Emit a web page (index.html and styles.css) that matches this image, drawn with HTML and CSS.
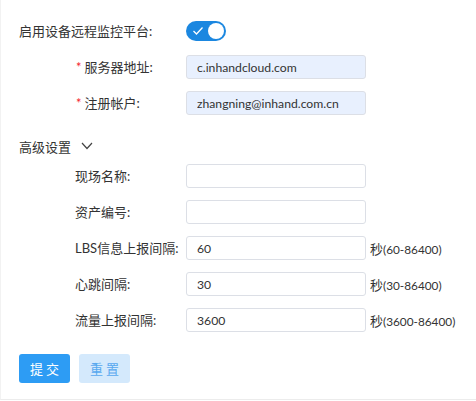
FILE: index.html
```html
<!DOCTYPE html>
<html>
<head>
<meta charset="utf-8">
<link rel="stylesheet" href="styles.css">
</head>
<body>
<div class="panel">
  <div class="row row-first">
    <div class="label label-wide">启用设备远程监控平台:</div>
    <div class="switch">
      <svg class="check" width="12" height="10" viewBox="0 0 12 10"><polyline points="1.5,5 4.5,8 10.5,1.5" fill="none" stroke="#fff" stroke-width="1.3"/></svg>
      <span class="knob"></span>
    </div>
  </div>
  <div class="row">
    <div class="label label-indent"><span class="req">*</span>服务器地址:</div>
    <input class="field filled" value="c.inhandcloud.com">
  </div>
  <div class="row">
    <div class="label label-indent"><span class="req">*</span>注册帐户:</div>
    <input class="field filled" value="zhangning@inhand.com.cn">
  </div>

  <div class="section">
    <span>高级设置</span>
    <svg class="chev" width="12" height="8" viewBox="0 0 12 8"><polyline points="1,1 6,6.5 11,1" fill="none" stroke="#444" stroke-width="1.2"/></svg>
  </div>

  <div class="row">
    <div class="label label-adv">现场名称:</div>
    <input class="field" value="">
  </div>
  <div class="row">
    <div class="label label-adv">资产编号:</div>
    <input class="field" value="">
  </div>
  <div class="row">
    <div class="label label-adv">LBS信息上报间隔:</div>
    <input class="field" value="60">
    <span class="unit"><span class="unit-cjk">秒</span>(60-86400)</span>
  </div>
  <div class="row">
    <div class="label label-adv">心跳间隔:</div>
    <input class="field" value="30">
    <span class="unit"><span class="unit-cjk">秒</span>(30-86400)</span>
  </div>
  <div class="row">
    <div class="label label-adv">流量上报间隔:</div>
    <input class="field" value="3600">
    <span class="unit"><span class="unit-cjk">秒</span>(3600-86400)</span>
  </div>

  <div class="actions">
    <button class="btn btn-primary">提 交</button>
    <button class="btn btn-light">重 置</button>
  </div>
</div>
</body>
</html>
```

FILE: styles.css
```css
html, body {
  margin: 0;
  padding: 0;
  background: #fff;
}
body {
  font-family: Lato, "Noto Sans CJK SC", sans-serif;
  font-size: 13px;
  color: #333;
}
.panel {
  box-sizing: border-box;
  height: 400px;
  border-left: 1px solid #f2f2f2;
  border-bottom: 1px solid #ececec;
  padding: 19px 0 0 18px;
}
.row {
  display: flex;
  align-items: center;
  height: 24px;
  margin-bottom: 12px;
}
.row-first {
  margin-bottom: 12px;
}
.label {
  flex: none;
  white-space: nowrap;
  color: #333;
  line-height: 24px;
}
.label-wide {
  width: 167px;
}
.label-indent {
  width: 110px;
  padding-left: 57px;
}
.label-adv {
  width: 111px;
  padding-left: 56px;
}
.req {
  color: #f5222d;
  margin-right: 3px;
}
.switch {
  position: relative;
  width: 40px;
  height: 20px;
  border-radius: 10px;
  background: #1b87e0;
  display: flex;
  align-items: center;
}
.check {
  margin-left: 6px;
}
.knob {
  position: absolute;
  right: 2px;
  top: 2px;
  width: 16px;
  height: 16px;
  border-radius: 50%;
  background: #fff;
}
.field {
  box-sizing: border-box;
  width: 180px;
  height: 24px;
  border: 1px solid #dcdfe6;
  border-radius: 3px;
  padding: 0 0 0 10px;
  font-family: Lato, "Noto Sans CJK SC", sans-serif;
  font-size: 12.2px;
  color: #333;
  background: #fff;
  outline: none;
  flex: none;
}
.filled {
  background: #e8f0fe;
}
.unit {
  margin-left: 4px;
  color: #333;
  white-space: nowrap;
  font-size: 11.8px;
}
.unit-cjk {
  font-size: 13px;
}
.section {
  display: flex;
  align-items: center;
  height: 20px;
  margin-top: 21px;
  margin-bottom: 8px;
  color: #333;
}
.chev {
  margin-left: 10px;
}
.actions {
  display: flex;
  gap: 9px;
  margin-top: 22px;
}
.btn {
  box-sizing: border-box;
  width: 51px;
  height: 29px;
  border: none;
  border-radius: 3px;
  font-family: "Noto Sans CJK SC", sans-serif;
  font-size: 13px;
  padding: 0;
}
.btn-primary {
  background: #2d9cf4;
  color: #fff;
}
.btn-light {
  background: #d4e9fc;
  color: #58a8ef;
}
```
